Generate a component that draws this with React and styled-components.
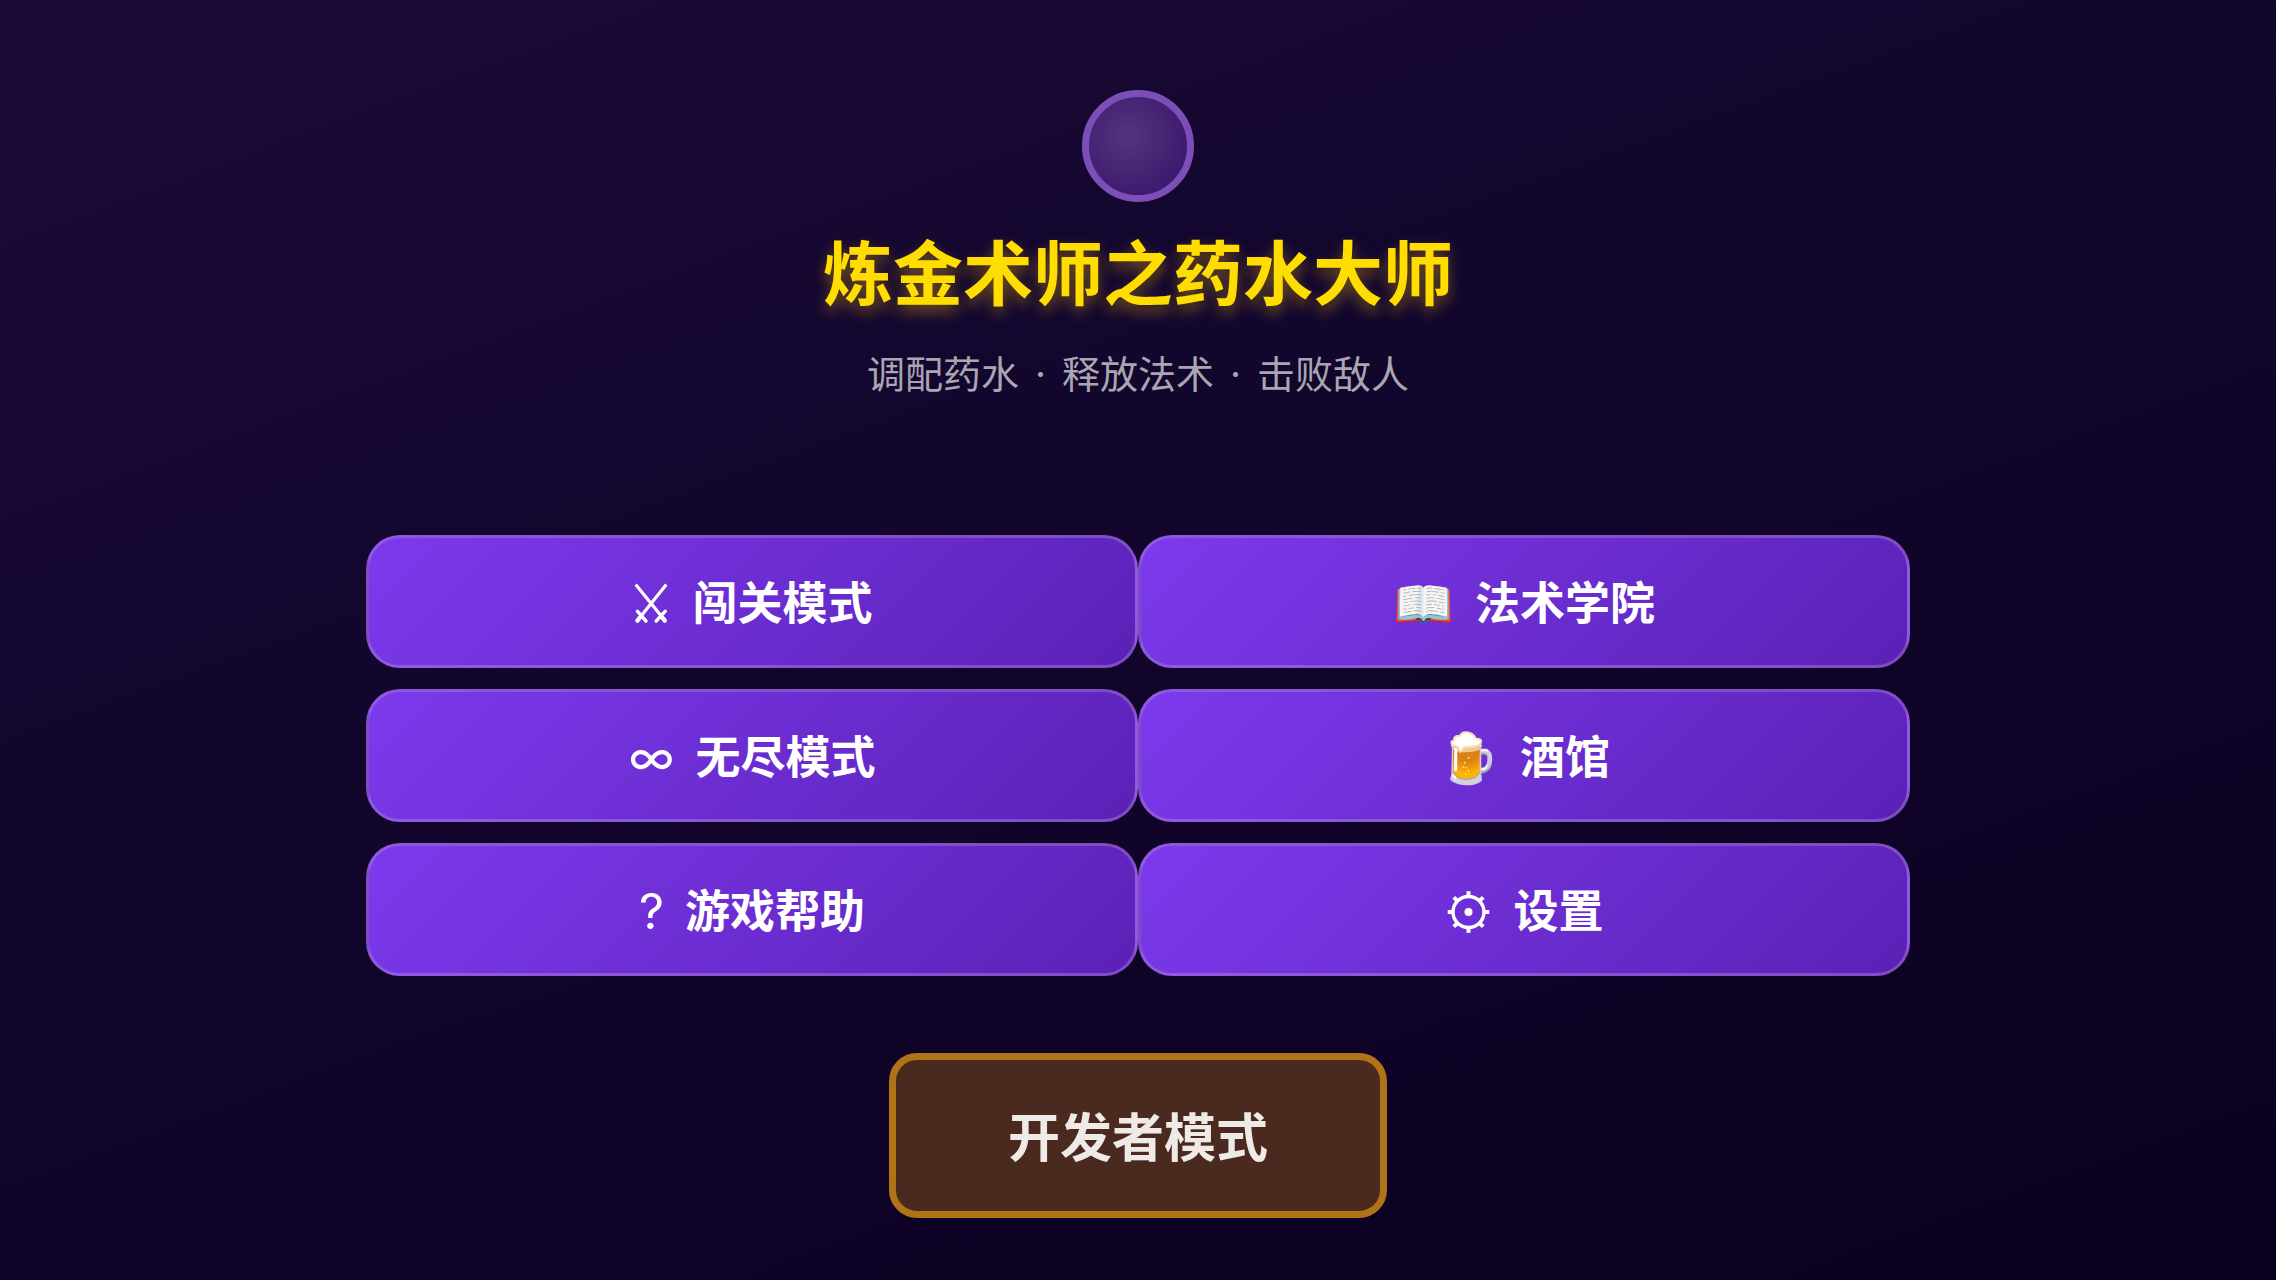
import React from "react";
import styled, { createGlobalStyle } from "styled-components";

const GlobalStyle = createGlobalStyle`
  *, *::before, *::after { box-sizing: border-box; }
  body {
    margin: 0;
    background: #0b0020;
    font-family: "Noto Sans CJK SC", sans-serif;
  }
`;

const Screen = styled.main`
  min-height: 100vh;
  padding: 90px 24px 62px;
  display: flex;
  flex-direction: column;
  align-items: center;
  background: linear-gradient(160deg, #1c0b36 0%, #12062d 40%, #0b0020 100%);
`;

const Orb = styled.div`
  width: 112px;
  height: 112px;
  border-radius: 50%;
  border: 7px solid #7c4fb8;
  background: radial-gradient(circle at 40% 40%, #54357f, #3c1a6e 75%);
`;

const Title = styled.h1`
  margin: 16px 0 0;
  font-size: 70px;
  line-height: 104px;
  font-weight: 700;
  color: #ffdd00;
  text-shadow: 0 7px 14px rgba(255, 190, 0, 0.4);
`;

const Subtitle = styled.p`
  margin: 24px 0 0;
  display: flex;
  gap: 16px;
  font-family: Inter, "Noto Sans CJK SC", sans-serif;
  font-size: 38px;
  line-height: 56px;
  color: #aaa5b2;
`;

const Menu = styled.nav`
  width: 1544px;
  max-width: 100%;
  margin-top: 133px;
  display: grid;
  grid-template-columns: 1fr 1fr;
  gap: 21px 0;
`;

const MenuButton = styled.button`
  height: 133px;
  padding: 0 24px 2px;
  display: flex;
  align-items: center;
  justify-content: center;
  gap: 21px;
  border: 3px solid rgba(180, 140, 210, 0.4);
  border-radius: 34px;
  background: linear-gradient(135deg, #7c3aed, #5b21b6);
  color: #fff;
  font-family: inherit;
  font-size: 45px;
  font-weight: 700;
  line-height: 66px;
  cursor: pointer;
`;

const Icon = styled.span`
  padding-top: 6px;
  font-family: Inter, "Noto Sans CJK SC", sans-serif;
  font-size: 49px;
  font-weight: 400;
`;

const Glyph = styled.svg`
  flex: none;
  height: 48px;
  fill: none;
  stroke: currentColor;
`;

const DevButton = styled.button`
  margin-top: 77px;
  padding: 36px 112px 38px;
  border: 7px solid #b07318;
  border-radius: 28px;
  background: #4a2a1e;
  color: #efeae8;
  font-family: inherit;
  font-size: 52px;
  font-weight: 700;
  line-height: 77px;
  cursor: pointer;
`;

function Swords() {
  return (
    <Glyph width="40" viewBox="0 0 40 48" aria-hidden="true">
      <path d="M4.7 7.5 L33.7 43.3 M35.3 7.5 L6.7 43.3" strokeWidth="3.2" />
      <path d="M6.3 34.2 L15 44 M34.3 34.2 L25.2 44" strokeWidth="3.4" strokeLinecap="round" />
      <path d="M6.4 43.6 L8.4 41.2 M33.8 43.6 L31.8 41.2" strokeWidth="4.4" strokeLinecap="round" />
    </Glyph>
  );
}

function Gear() {
  return (
    <Glyph width="48" viewBox="0 0 48 48" aria-hidden="true">
      <circle cx="24.5" cy="27" r="15.5" strokeWidth="3.4" />
      <circle cx="24.5" cy="27" r="4" fill="currentColor" stroke="none" />
      {[0, 45, 90, 135, 180, 225, 270, 315].map((angle) => (
        <path key={angle} d="M24.5 11 V6.2" strokeWidth="4" transform={`rotate(${angle} 24.5 27)`} />
      ))}
    </Glyph>
  );
}

const taglines = ["调配药水", "·", "释放法术", "·", "击败敌人"];

const items = [
  { icon: <Swords />, label: "闯关模式" },
  { icon: <Icon aria-hidden="true">📖</Icon>, label: "法术学院" },
  { icon: <Icon aria-hidden="true">∞</Icon>, label: "无尽模式" },
  { icon: <Icon aria-hidden="true">🍺</Icon>, label: "酒馆" },
  { icon: <Icon aria-hidden="true">?</Icon>, label: "游戏帮助" },
  { icon: <Gear />, label: "设置" },
];

export default function App() {
  return (
    <Screen>
      <GlobalStyle />
      <Orb />
      <Title>炼金术师之药水大师</Title>
      <Subtitle>
        {taglines.map((text, index) => (
          <span key={index}>{text}</span>
        ))}
      </Subtitle>
      <Menu>
        {items.map(({ icon, label }) => (
          <MenuButton key={label} type="button">
            {icon}
            <span>{label}</span>
          </MenuButton>
        ))}
      </Menu>
      <DevButton type="button">开发者模式</DevButton>
    </Screen>
  );
}
